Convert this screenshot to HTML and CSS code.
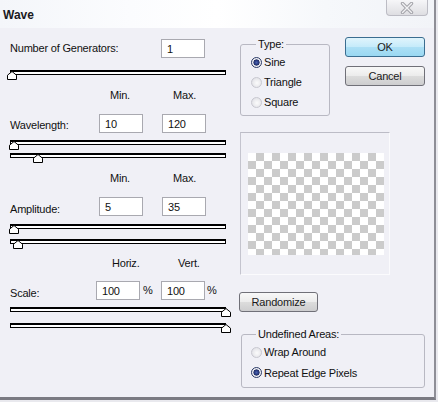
FILE: index.html
```html
<!DOCTYPE html>
<html>
<head>
<meta charset="utf-8">
<title>Wave</title>
<link rel="stylesheet" href="styles.css">
</head>
<body>
<div class="window">
  <div class="titlebar">
    <span class="title">Wave</span>
    <span class="close"><svg width="16" height="12" viewBox="0 0 16 12"><path d="M3.5 1.5 L12.5 10.5 M12.5 1.5 L3.5 10.5" stroke="#a4a4aa" stroke-width="3.4" stroke-linecap="round" fill="none"/><path d="M3.5 1.5 L12.5 10.5 M12.5 1.5 L3.5 10.5" stroke="#f2f2f4" stroke-width="1.4" stroke-linecap="round" fill="none"/></svg></span>
  </div>
  <div class="main">
    <div class="left">
      <div class="row r-gen"><span class="lbl w-gen">Number of Generators:</span><span class="field">1</span></div>
      <div class="slider s-gen"><span class="thumb" style="left:-4px"><svg width="10" height="9" viewBox="0 0 10 9"><polygon points="0.5,8.5 0.5,4.2 5,0.5 9.5,4.2 9.5,8.5" fill="#fff" stroke="#000"/></svg></span></div>

      <div class="hdr h-mm h1"><span class="c1">Min.</span><span>Max.</span></div>
      <div class="row r-wave"><span class="lbl low w-89">Wavelength:</span><span class="field">10</span><span class="field f2">120</span></div>
      <div class="slider s-w1"><span class="thumb" style="left:-2px"><svg width="10" height="9" viewBox="0 0 10 9"><polygon points="0.5,8.5 0.5,4.2 5,0.5 9.5,4.2 9.5,8.5" fill="#fff" stroke="#000"/></svg></span></div>
      <div class="slider s-w2"><span class="thumb" style="left:22px"><svg width="10" height="9" viewBox="0 0 10 9"><polygon points="0.5,8.5 0.5,4.2 5,0.5 9.5,4.2 9.5,8.5" fill="#fff" stroke="#000"/></svg></span></div>

      <div class="hdr h-mm h2"><span class="c1">Min.</span><span>Max.</span></div>
      <div class="row r-amp"><span class="lbl low2 w-89">Amplitude:</span><span class="field">5</span><span class="field f2">35</span></div>
      <div class="slider s-a1"><span class="thumb" style="left:-2px"><svg width="10" height="9" viewBox="0 0 10 9"><polygon points="0.5,8.5 0.5,4.2 5,0.5 9.5,4.2 9.5,8.5" fill="#fff" stroke="#000"/></svg></span></div>
      <div class="slider s-a2"><span class="thumb" style="left:2px"><svg width="10" height="9" viewBox="0 0 10 9"><polygon points="0.5,8.5 0.5,4.2 5,0.5 9.5,4.2 9.5,8.5" fill="#fff" stroke="#000"/></svg></span></div>

      <div class="hdr h-hv"><span class="c2">Horiz.</span><span>Vert.</span></div>
      <div class="row r-scale"><span class="lbl low2 w-86">Scale:</span><span class="field">100</span><span class="pct">%</span><span class="field f3">100</span><span class="pct p2">%</span></div>
      <div class="slider s-s1"><span class="thumb" style="left:210px"><svg width="10" height="9" viewBox="0 0 10 9"><polygon points="0.5,8.5 0.5,4.2 5,0.5 9.5,4.2 9.5,8.5" fill="#fff" stroke="#000"/></svg></span></div>
      <div class="slider s-s2"><span class="thumb" style="left:210px"><svg width="10" height="9" viewBox="0 0 10 9"><polygon points="0.5,8.5 0.5,4.2 5,0.5 9.5,4.2 9.5,8.5" fill="#fff" stroke="#000"/></svg></span></div>
    </div>

    <div class="right">
      <div class="top-right">
        <fieldset class="group g-type">
          <legend>Type:</legend>
          <div class="opt"><span class="radio on"></span><span>Sine</span></div>
          <div class="opt"><span class="radio"></span><span>Triangle</span></div>
          <div class="opt"><span class="radio"></span><span>Square</span></div>
        </fieldset>
        <div class="buttons">
          <div class="btn ok">OK</div>
          <div class="btn">Cancel</div>
        </div>
      </div>
      <div class="preview"><div class="checker"></div></div>
      <div class="btn randomize">Randomize</div>
      <fieldset class="group g-undef">
        <legend>Undefined Areas:</legend>
        <div class="opt"><span class="radio"></span><span>Wrap Around</span></div>
        <div class="opt"><span class="radio on"></span><span>Repeat Edge Pixels</span></div>
      </fieldset>
    </div>
  </div>
</div>
</body>
</html>
```

FILE: styles.css
```css
html, body {
  margin: 0;
  padding: 0;
}
body {
  width: 438px;
  height: 402px;
  background: #e9e9ee;
  overflow: hidden;
  font-family: "Liberation Sans", Arial, sans-serif;
  font-size: 11px;
  letter-spacing: -0.2px;
  color: #111;
}
.window {
  width: 436px;
  height: 400px;
  box-sizing: border-box;
  background: #f0f0f6;
  border-right: 2px solid #8e8e96;
  border-bottom: 3px solid #7a7a82;
}
.titlebar {
  height: 28px;
  display: flex;
  align-items: flex-start;
  background: linear-gradient(90deg, #f4f6fa 0%, #fbfcfe 30%, #ffffff 50%, #f6f8fb 75%, #f2f4f8 100%);
}
.title {
  font-weight: bold;
  font-size: 12px;
  letter-spacing: 0;
  padding: 8px 0 0 3px;
  line-height: 14px;
  color: #1a1a22;
}
.close {
  margin-left: auto;
  margin-right: 6px;
  width: 42px;
  height: 16px;
  box-sizing: border-box;
  border: 1px solid #bcbcc4;
  border-top: none;
  border-radius: 0 0 4px 4px;
  background: linear-gradient(#f6f6f8, #dedee2);
  display: flex;
  align-items: center;
  justify-content: center;
}
.main {
  display: flex;
  align-items: flex-start;
}
.left {
  margin-left: 10px;
  width: 216px;
  display: flex;
  flex-direction: column;
}
.row {
  display: flex;
  align-items: center;
  height: 19px;
}
.lbl {
  flex: none;
  line-height: 13px;
}
.lbl.low { padding-top: 3px; }
.lbl.low2 { padding-top: 5px; }
.w-gen { width: 151px; }
.w-89 { width: 89px; }
.w-86 { width: 86px; }
.field {
  flex: none;
  width: 44px;
  height: 19px;
  box-sizing: border-box;
  border: 1px solid #a9a9b0;
  background: #fff;
  padding: 2px 0 0 5px;
  line-height: 14px;
}
.field.f2 { margin-left: 19px; }
.field.f3 { margin-left: 8px; }
.pct {
  width: 10px;
  margin-left: 3px;
  line-height: 13px;
}
.pct.p2 { margin-left: 2px; }
.r-gen { margin-top: 11px; }
.r-wave { margin-top: 12px; }
.r-amp { margin-top: 12px; }
.r-scale { margin-top: 11px; }

.slider {
  position: relative;
  width: 214px;
  height: 2px;
  border: 1px solid #000;
  border-top-width: 2px;
  background: #fff;
}
.thumb {
  position: absolute;
  top: -1px;
  width: 10px;
  height: 9px;
  display: block;
}
.thumb svg { display: block; }
.s-gen { margin-top: 12px; }
.s-w1 { margin-top: 7px; }
.s-w2 { margin-top: 8px; }
.s-a1 { margin-top: 8px; }
.s-a2 { margin-top: 10px; }
.s-s1 { margin-top: 7px; }
.s-s2 { margin-top: 11px; }

.hdr {
  display: flex;
  height: 14px;
  line-height: 14px;
}
.h-mm { padding-left: 100px; }
.h-mm .c1 { width: 63px; }
.h1 { margin-top: 13px; }
.h2 { margin-top: 13px; }
.h-hv { padding-left: 102px; margin-top: 12px; }
.h-hv .c2 { width: 66px; }

.right {
  margin-left: 14px;
  width: 186px;
  display: flex;
  flex-direction: column;
}
.top-right {
  display: flex;
  align-items: flex-start;
  margin-top: 9px;
}
.group {
  margin: 0;
  border: 1px solid #b8b8c2;
  border-radius: 3px;
  box-sizing: border-box;
  min-width: 0;
}
.group legend {
  padding: 0 2px;
  margin-left: 5px;
  line-height: 14px;
  height: 14px;
}
.g-type {
  width: 90px;
  padding: 1px 0 3px 10px;
}
.g-undef {
  width: 184px;
  margin: 15px 0 0 1px;
  padding: 1px 0 4px 9px;
}
.opt {
  display: flex;
  align-items: center;
  height: 20px;
  gap: 2px;
}
.g-undef .opt { height: 20.5px; }
.radio {
  flex: none;
  width: 11px;
  height: 11px;
  box-sizing: border-box;
  border-radius: 50%;
  border: 1px solid #c8c8d0;
  background: radial-gradient(circle at 55% 55%, #fbfbfb 0, #e8e8ec 60%, #d8d8de 100%);
}
.radio.on {
  border-color: #2a3a66;
  background: radial-gradient(circle, #4a63b0 0, #26367a 2.3px, #1c2a5e 2.8px, #f2f2f6 3.4px, #dcdce4 100%);
}

.buttons {
  margin-left: 15px;
  display: flex;
  flex-direction: column;
  gap: 9px;
}
.btn {
  width: 80px;
  height: 20px;
  box-sizing: border-box;
  border: 1px solid #707078;
  border-radius: 3px;
  background: linear-gradient(#f8f8f8 0%, #ececec 48%, #dcdcdc 52%, #cdcdcf 100%);
  text-align: center;
  line-height: 18px;
  color: #1a1a1a;
}
.btn.ok {
  border-color: #3a6d90;
  background: linear-gradient(#e0f4fc 0%, #c6ebfa 48%, #acdff5 52%, #9ad8f2 100%);
}
.preview {
  margin-top: 16px;
  width: 150px;
  height: 143px;
  box-sizing: border-box;
  border: 1px solid #d0d0d8;
  border-top-color: #bcbcc6;
  border-left-color: #c4c4ce;
  border-right-color: #fbfbfd;
  border-bottom-color: #fbfbfd;
  padding: 20px 0 0 7px;
}
.checker {
  width: 136px;
  height: 102px;
  background: repeating-conic-gradient(#cbcbcb 0 25%, #ffffff 0 50%) 0 0 / 16px 16px;
}
.randomize {
  margin-top: 17px;
  margin-left: -1px;
  width: 79px;
}
```
